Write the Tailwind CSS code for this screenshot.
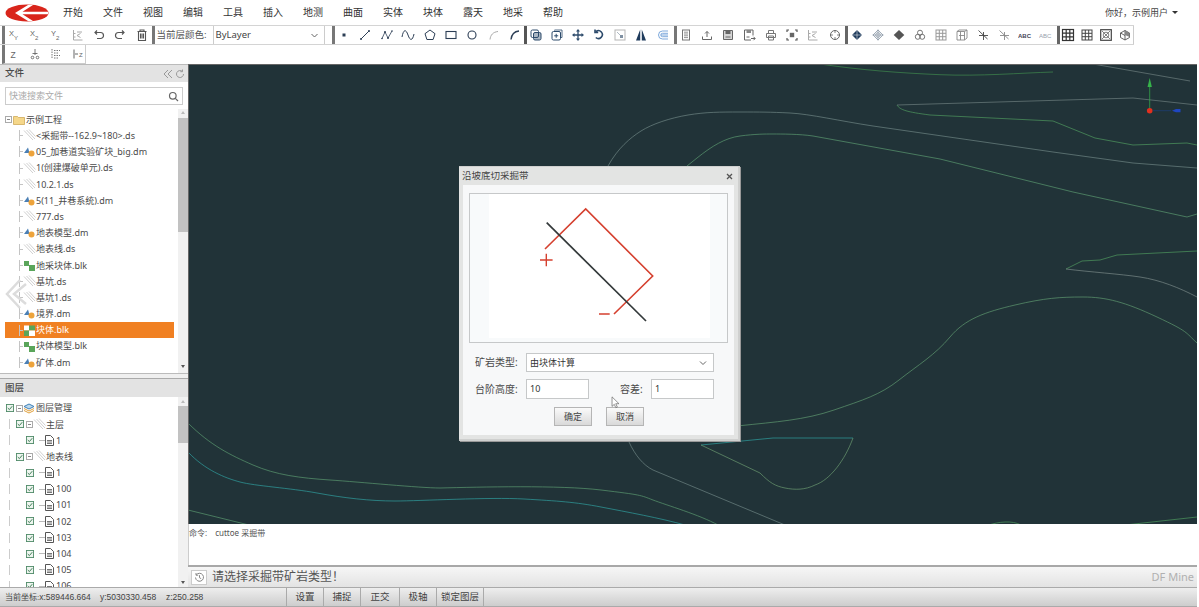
<!DOCTYPE html>
<html lang="zh-CN">
<head>
    <meta charset="UTF-8">
    <meta name="viewport" content="width=device-width, initial-scale=1.0">
    <title>DF Mine</title>
    <script src="https://cdn.jsdelivr.net/npm/@tailwindcss/browser@4"></script>
</head>
<body class="h-screen w-full overflow-hidden bg-white text-[#4a4a4a] font-['Noto_Sans','Noto_Sans_CJK_SC',sans-serif]">
<div class="flex flex-col h-[607px] w-[1197px]">

    <!-- 菜单栏 -->
    <div class="flex items-center h-[25px] shrink-0 w-[1199px] bg-white">
        <svg class="ml-[5px] w-[44px] h-[18px]" viewBox="0 0 44 18">
            <ellipse cx="22" cy="9" rx="21.5" ry="8.5" fill="#d9251b"/>
            <path d="M10 9 23 1h5L17.500 7.800H43v2.400H17.500L28 17h-5z" fill="#fff"/>
        </svg>
        <nav class="flex gap-[20px] ml-[14px] text-[10px] text-[#333]">
            <span>开始</span><span>文件</span><span>视图</span><span>编辑</span><span>工具</span><span>插入</span><span>地测</span>
            <span>曲面</span><span>实体</span><span>块体</span><span>露天</span><span>地采</span><span>帮助</span>
        </nav>
        <div class="flex items-center ml-auto mr-[21px] text-[9px] text-[#444]">
            你好，示例用户
            <span class="ml-[4px] w-0 h-0 border-x-[3px] border-x-transparent border-t-[3px] border-t-[#333]"></span>
        </div>
    </div>

    <!-- 工具栏 -->
    <div class="flex items-center h-[20px] shrink-0 pl-[2px] w-[1134px] border-y border-[#d4d4d4]">
        <div class="w-[149.5px] h-[18px] flex items-center gap-[7.4px] pl-[1.5px] border-l-[3px] border-[#777]" data-icons="xy,x2,y2,stackLight,undo,redo,trash"></div>
        <div class="w-[180.5px] h-[18px] flex items-center pl-[2px] border-l-[3px] border-[#777] text-[9.5px]">
            <span class="w-[56px] text-[#555]">当前层颜色:</span>
            <div class="w-[112px] h-[18px] flex items-center justify-between px-[2px] border-x border-[#ccc] text-[9.5px] text-[#444]">
                ByLayer
                <svg class="w-[9px] h-[9px] mr-[3px]" viewBox="0 0 9 9" fill="none" stroke="#666"><path d="M1.500 3 4.500 6 7.500 3"/></svg>
            </div>
        </div>
        <div class="w-[191.5px] h-[18px] flex items-center gap-[7.4px] pl-[2px] border-l-[3px] border-[#777]" data-icons="dot,line,poly,wave,pentagon,rect,circle,arcLight,arcDark"></div>
        <div class="w-[150px] h-[18px] flex items-center gap-[7.2px] pl-[2px] border-l-[3px] border-[#555]" data-icons="copy,copyPlus,move,rotate,scale,mirror,offset"></div>
        <div class="w-[171.5px] h-[18px] flex items-center gap-[7.3px] pl-[2px] border-l-[3px] border-[#777]" data-icons="doc,upload,save,saveAs,printer,focus,stackLight,target"></div>
        <div class="w-[211.5px] h-[18px] flex items-center gap-[7.05px] pl-[2px] border-l-[3px] border-[#666]" data-icons="diamondCross,diamondRing,diamond,cubes,gridLight,boxGrid,starDark,starLight,abc,abcLight"></div>
        <div class="w-[77.5px] h-[18px] flex items-center gap-[5px] pl-[1.5px] border-l-[3px] border-r border-l-[#666] border-r-[#ccc]" data-icons="gridBold,grid,xSquare,cube"></div>
    </div>
    <div class="flex items-center h-[19px] shrink-0">
        <div class="w-[84px] ml-[2px] h-[19px] flex items-center gap-[7.4px] pl-[1.5px] border-l-[3px] border-r border-b border-l-[#777] border-r-[#ccc] border-b-[#ccc]" data-icons="z,node,stackDash,barZ"></div>
    </div>

    <!-- 主体 -->
    <div class="flex flex-1 min-h-0 relative">
        <!-- 侧栏 -->
        <aside class="flex flex-col w-[188px] shrink-0 bg-white">
            <div class="flex items-center justify-between h-[18px] shrink-0 pl-[5px] pr-[3px] bg-[#e3e3e3] text-[9.5px] font-medium border-t border-[#bbb]">
                文件
                <span class="flex items-center gap-[2px]">
                    <svg class="w-[10px] h-[10px]" viewBox="0 0 10 10" fill="none" stroke="#999"><path d="M5 1 1 5l4 4M9 1 5 5l4 4"/></svg>
                    <svg class="w-[10px] h-[10px]" viewBox="0 0 10 10" fill="none" stroke="#999"><path d="M8.500 5a3.500 3.500 0 1 1-1.200-2.600M7.500 0.500v2.200H5.300"/></svg>
                </span>
            </div>
            <div class="h-[27px] shrink-0 pt-[5px] pl-[5px] pr-[5px]">
                <div class="flex items-center justify-between h-[18px] px-[3px] border border-[#ccc] text-[9px] text-[#aaa]">
                    快速搜索文件
                    <svg class="w-[11px] h-[11px]" viewBox="0 0 11 11" fill="none" stroke="#666" stroke-width="1.200"><circle cx="4.800" cy="4.800" r="3.300"/><path d="m7.300 7.300 2.700 2.700"/></svg>
                </div>
            </div>
            <div class="relative h-[264px] shrink-0 overflow-hidden">
                <div id="fileTree" class="pt-[2.5px] text-[9px]"></div>
                <div class="absolute right-0 top-0 bottom-0 w-[10px] bg-[#f1f1f1]">
                    <div class="mt-[9px] h-[114px] bg-[#c2c2c2]"></div>
                </div>
                <span class="absolute right-[3px] top-[2px] w-0 h-0 border-x-[2.5px] border-x-transparent border-b-[3px] border-b-[#bbb]"></span>
                <span class="absolute right-[3px] bottom-[5px] w-0 h-0 border-x-[2.5px] border-x-transparent border-t-[3px] border-t-[#555]"></span>
                <!-- 翻页箭头 -->
                <svg class="absolute left-[5px] top-[170px] w-[22px] h-[30px]" viewBox="0 0 22 30" fill="none" stroke="#dcdcdc" stroke-width="2.500"><path d="M15 1 2 15l13 14M21 5 9 15l12 10"/></svg>
            </div>
            <div class="h-[5px] shrink-0 bg-[#efefef] border-t border-[#bbb]"></div>
            <div class="flex items-center h-[19px] shrink-0 pl-[5px] bg-[#e3e3e3] border-t border-[#aaa] text-[9.5px] font-medium">图层</div>
            <div class="relative flex-1 min-h-0 overflow-hidden">
                <div id="layerTree" class="pt-[3px] text-[9px]"></div>
                <div class="absolute right-0 top-0 bottom-0 w-[10px] bg-[#f1f1f1]">
                    <div class="mt-[9px] h-[37px] bg-[#c2c2c2]"></div>
                </div>
                <span class="absolute right-[3px] top-[3px] w-0 h-0 border-x-[2.5px] border-x-transparent border-b-[3px] border-b-[#bbb]"></span>
                <span class="absolute right-[3px] bottom-[3px] w-0 h-0 border-x-[2.5px] border-x-transparent border-t-[3px] border-t-[#555]"></span>
            </div>
        </aside>

        <!-- 绘图区 -->
        <main class="flex flex-col flex-1 min-w-0">
            <div class="relative flex-1 min-h-0 bg-[#213338] border-t border-l border-[#666] overflow-hidden">
                <svg class="absolute left-[-1px] top-[-1px] w-[1009px] h-[461px]" viewBox="188 64 1009 461" fill="none" stroke-width="0.700">
                    <path stroke="#3f8a4e" d="M820 64C860 70 900 73 940 74.700S1020 73 1053 72"/>
                    <path stroke="#6f7f80" d="M1093 64 1190 81"/>
                    <path stroke="#6f7f80" d="M897 105 1133 98 1197 105"/>
                    <path stroke="#4f9a5e" d="M897 105C900 110 907 112 930 115L1053 121 1095 138 1133 145 1187 143 1197 145"/>
                    <path stroke="#6f8584" d="M608 166C618 148 630 138 641 131S670 118 688 115 720 112 740 112 770 112 790 113 840 121 873 126L1053 152 1133 163 1197 168"/>
                    <path stroke="#5a9a70" d="M687 166 697 158C712 146 725 138 740 136S765 134 773 134 800 134 813 136L940 159 1073 192 1187 217 1197 214"/>
                    <path stroke="#4f9a5e" d="M1197 251 1117 255 1100 260 1082 261 1066 269"/>
                    <path stroke="#7a8a88" d="M1066 269C1090 272 1120 274 1140 277S1180 288 1197 297"/>
                    <path stroke="#5f9a70" d="M740 425.700C775 422 805 420 834 410S880 395 899 380 935 355 950 337 985 312 1015 305 1060 297 1083 297 1125 302 1157 317 1185 332 1197 343"/>
                    <path stroke="#2f9f9f" d="M701 445 773 438 853 438"/>
                    <path stroke="#6a9a70" d="M853 438C845 460 830 480 815 485 805 490 795 490 785 488S770 483 760 473L701 445"/>
                    <path stroke="#6f8584" d="M629 442C635 455 643 465 653 470L785 525"/>
                    <path stroke="#5a9a70" d="M188 423C210 445 230 455 253 465S300 478 330 480 420 488 440 488C480 487 560 485 601 490S640 495 653 500 700 515 718 525"/>
                    <path stroke="#2f9f9f" d="M188 452C205 470 225 478 240 482S290 488 317 493 370 501 395 501 490 497 524 499 575 502 601 507 660 518 685 525"/>
                    <path stroke="#5a9a70" d="M188 510 249 525"/>
                    <path stroke="#4f9a5e" d="M989 525C998 522 1012 520 1021 525M1125 525 1197 517"/>
                    <!-- 坐标轴 -->
                    <path stroke="#36b24a" d="M1149.700 84v26"/>
                    <path fill="#36b24a" stroke="none" d="M1149.700 78l2.200 9h-4.400z"/>
                    <path stroke="#1c3f7a" d="M1153 110.700h18"/>
                    <path fill="#1f46c0" stroke="none" d="M1172 110.700l4-1.600h4.500v3.200H1176z"/>
                    <circle cx="1149.700" cy="110.700" r="2.800" fill="#e2301f" stroke="none"/>
                </svg>

                <!-- 对话框 -->
                <div class="absolute left-[270px] top-[101px] w-[281px] h-[275px] flex flex-col bg-[#e3e4e3] border-t border-r-2 border-b-2 border-[#cfd0cf] shadow-[1px_1px_0_#999]">
                    <div class="flex items-center justify-between h-[18px] shrink-0 pl-[3px] pr-[5px] text-[9.5px] text-[#444]">
                        沿坡底切采掘带
                        <svg class="w-[7px] h-[7px]" viewBox="0 0 7 7" stroke="#555" stroke-width="1.300"><path d="m1 1 5 5M6 1 1 6"/></svg>
                    </div>
                    <div class="relative flex-1 mx-[4px] mb-[4px] px-[6px] pt-[8px] bg-[#f7f8f9]">
                        <div class="h-[150px] border border-[#c6c8c9] bg-[#f8fafb]">
                            <svg class="w-[258px] h-[148px]" viewBox="0 0 258 148" fill="none">
                                <rect x="19" y="0" width="221" height="144" fill="#fff"/>
                                <path stroke="#d5402f" stroke-width="1.600" d="M75 55 115.700 15 182.700 82 144 120"/>
                                <path stroke="#33393a" stroke-width="1.700" d="M76.700 28.700 176 127"/>
                                <path stroke="#d5402f" stroke-width="1.400" d="M70 66h12.600M76.300 59.700v12.600M129 120h10.700"/>
                            </svg>
                        </div>
                        <div class="flex items-center h-[19px] mt-[10px] text-[10px]">
                            <span class="w-[57px] pl-[6px] shrink-0">矿岩类型:</span>
                            <div class="w-[188px] h-[19px] flex items-center justify-between pl-[3px] pr-[6px] bg-white border border-[#c6c8c9] text-[9px] text-[#333]">
                                由块体计算
                                <svg class="w-[8px] h-[8px]" viewBox="0 0 8 8" fill="none" stroke="#666"><path d="M1 2.500 4 5.500 7 2.500"/></svg>
                            </div>
                        </div>
                        <div class="flex items-center h-[20px] mt-[7px] text-[10px]">
                            <span class="w-[57px] pl-[6px] shrink-0">台阶高度:</span>
                            <div class="w-[63px] h-[20px] flex items-center pl-[3px] bg-white border border-[#c6c8c9] text-[9px] text-[#333]">10</div>
                            <span class="w-[31px] ml-[31px] shrink-0">容差:</span>
                            <div class="w-[63px] h-[20px] flex items-center pl-[3px] bg-white border border-[#c6c8c9] text-[9px] text-[#333]">1</div>
                        </div>
                        <div class="flex gap-[14px] mt-[8px] pl-[85px] text-[9px] text-[#444]">
                            <button class="w-[38px] h-[19px] border border-[#b5b5b5] bg-gradient-to-b from-[#fafafa] to-[#d9d9d9]">确定</button>
                            <button class="w-[38px] h-[19px] border border-[#b5b5b5] bg-gradient-to-b from-[#fafafa] to-[#d9d9d9]">取消</button>
                        </div>
                        <svg class="absolute left-[148px] top-[211px] w-[9px] h-[13px]" viewBox="0 0 10 15" fill="#fff" stroke="#666" stroke-width="0.800"><path d="M1 1v11l2.600-2.400 1.800 4 1.700-.8-1.800-3.900H9z"/></svg>
                    </div>
                </div>
            </div>

            <!-- 命令行 -->
            <div class="h-[41px] shrink-0 bg-white border-l border-[#ccc] text-[8px] text-[#555] pt-[3px] whitespace-nowrap">命令:<span class="ml-[8px]">cuttoe 采掘带</span></div>
            <div class="flex items-center h-[22px] shrink-0 border-t-2 border-[#a8a8a8] bg-gradient-to-b from-[#f6f6f6] to-[#e3e3e3]">
                <span class="flex items-center justify-center ml-[3px] w-[16px] h-[15px] bg-white border border-[#ccc]">
                    <svg class="w-[11px] h-[11px]" viewBox="0 0 11 11" fill="none" stroke="#888"><path d="M2.200 3A4 4 0 1 1 1.500 5.500M2 1v2.200h2.200M5.500 3.200v2.500l1.700 1"/></svg>
                </span>
                <span class="ml-[5px] text-[12px] text-[#555]">请选择采掘带矿岩类型！</span>
                <span class="ml-auto mr-[3px] mt-[1px] text-[11px] text-[#b0b0b0]">DF Mine</span>
            </div>
        </main>
    </div>

    <!-- 状态栏 -->
    <div class="flex items-center h-[20px] shrink-0 border-y border-[#aaa] bg-gradient-to-b from-[#eeeeee] to-[#cdcdcd] text-[9.5px] text-[#444]">
        <div class="flex items-center w-[286px] pl-[5px] whitespace-nowrap text-[8.5px] font-['Liberation_Sans','Noto_Sans_CJK_SC',sans-serif]">
            <span class="w-[95px]"><span class="text-[8px]">当前坐标:</span>x:589446.664</span>
            <span class="w-[66px]">y:5030330.458</span>
            <span>z:250.258</span>
        </div>
        <span class="flex items-center justify-center w-[37px] h-full border-l border-[#aaa]">设置</span>
        <span class="flex items-center justify-center w-[37px] h-full border-l border-[#aaa]">捕捉</span>
        <span class="flex items-center justify-center w-[39px] h-full border-l border-[#aaa]">正交</span>
        <span class="flex items-center justify-center w-[37px] h-full border-l border-[#aaa]">极轴</span>
        <span class="flex items-center justify-center w-[48px] h-full border-x border-[#aaa]">锁定图层</span>
    </div>
</div>

<script>
    // Toolbar icons, 14x14
    const t = (x, y, s, c, w) => `<text x="${x}" y="${y}" font-size="${s}" fill="${c || '#666'}" font-weight="${w || 400}" stroke="none" font-family="Liberation Sans">`;
    const icons = {
        xy: `${t(2,8,7.5)}X</text>${t(7,12,6)}Y</text>`,
        x2: `${t(2,8,7.5)}X</text>${t(7,12,6)}2</text>`,
        y2: `${t(2,8,7.5)}Y</text>${t(7,12,6)}2</text>`,
        stackLight: `<path stroke="#aaa" d="M2.500 2v10h9M2.500 5.500h2M2.500 9h2M6 4l5 0M6 7.500l3.500 2M6 7.500l3.500-2"/>`,
        undo: `<path stroke="#555" stroke-width="1.200" d="M5 2.500 3 4.500 5 6.500M3 4.500H8.500a2.800 2.800 0 0 1 0 6H5"/>`,
        redo: `<path stroke="#555" stroke-width="1.200" d="M9 2.500l2 2L9 6.500M11 4.500H5.500a2.800 2.800 0 0 0 0 6h3.500"/>`,
        trash: `<path stroke="#555" stroke-width="1.100" d="M2.500 3.500h9M5 3.500V2h4v1.500M3.500 3.500v9h7v-9M5.500 5.500v5M7 5.500v5M8.500 5.500v5"/>`,
        dot: `<rect x="5.500" y="5.500" width="3" height="3" fill="#2c3e55" stroke="none"/>`,
        line: `<path stroke="#2c3e55" d="M3 11 11 3"/><circle cx="3" cy="11" r="1" fill="#2c3e55" stroke="none"/><circle cx="11" cy="3" r="1" fill="#2c3e55" stroke="none"/>`,
        poly: `<path stroke="#2c3e55" stroke-width=".8" d="M2 10.500 5 4 8 10 12 3"/><circle cx="5" cy="4" r="1" fill="#2c3e55" stroke="none"/><circle cx="8" cy="10" r="1" fill="#2c3e55" stroke="none"/><circle cx="2" cy="10.500" r=".8" fill="#2c3e55" stroke="none"/><circle cx="12" cy="3" r=".8" fill="#2c3e55" stroke="none"/>`,
        wave: `<path stroke="#2c3e55" d="M1 9C2.500 1 5 1 7 7s4.500 6 6-1"/>`,
        pentagon: `<path stroke="#2c3e55" d="M7 2 12 5.700 10.100 11.500H3.900L2 5.700z"/>`,
        rect: `<rect x="2" y="3.500" width="10" height="7" stroke="#2c3e55" stroke-width="1.100"/>`,
        circle: `<circle cx="7" cy="7" r="4" stroke="#2c3e55" stroke-width="1.100"/>`,
        arcLight: `<path stroke="#aaa" d="M3 11.500C3.500 7 6 4 11 3.500"/>`,
        arcDark: `<path stroke="#2c3e55" stroke-width="1.400" d="M3 11.500C3.500 7 6 3.500 11 3"/>`,
        copy: `<rect x="2" y="2" width="7.500" height="7.500" rx="1.500" stroke="#2c4a6b"/><rect x="4.500" y="4.500" width="7.500" height="7.500" rx="1.500" fill="#2c4a6b" fill-opacity=".4" stroke="#2c4a6b"/>`,
        copyPlus: `<path stroke="#2c4a6b" stroke-width=".8" d="M4.500 2.500V2h7.500v7.500h-1"/><rect x="2" y="3.500" width="8.500" height="8.500" rx="1.500" stroke="#2c4a6b"/><path stroke="#2c4a6b" d="M6.200 5.800v4M4.200 7.800h4"/>`,
        move: `<path stroke="#2c4a6b" stroke-width="1.300" d="M7 3v8M3 7h8"/><path fill="#2c4a6b" stroke="none" d="M7 1 9 3.500H5zM7 13 5 10.500h4zM1 7 3.500 5v4zM13 7 10.500 9V5z"/>`,
        rotate: `<path stroke="#2c4a6b" stroke-width="1.600" d="M4 3.500A3.900 3.900 0 1 1 3.800 9.500M3 1.500v3h3.200"/>`,
        scale: `<rect x="2" y="2" width="10" height="10" stroke="#b5b5b5"/><rect x="7" y="7" width="3" height="3" fill="#7f90a2" stroke="none"/><path stroke="#9aa8b5" stroke-width=".8" d="M4 4l3 3"/>`,
        mirror: `<path fill="#1f3b5c" stroke="none" d="M6.200 1.500V12.500H2zM7.800 1.500V12.500H12z"/>`,
        offset: `<path stroke="#6f9fd8" stroke-width=".9" d="M12 3H6.500a4 4 0 0 0 0 8H12M12 5.300H6.500a1.700 1.700 0 0 0 0 3.400H12M5 7h7"/>`,
        doc: `<rect x="3.500" y="2" width="7" height="10" stroke="#777"/><path stroke="#777" stroke-width=".8" d="M5 4.200h4M5 6h4M5 7.800h4M5 9.600h4"/>`,
        upload: `<path stroke="#666" d="M7 9V3.500M5 5.500 7 3.500 9 5.500M2.500 8.500V11.500H11.500V8.500"/>`,
        save: `<path stroke="#666" fill="#d5d5d5" d="M2.500 2.500h9v9h-9z"/><path fill="#666" stroke="none" d="M4.500 2.500h5v3.500h-5z"/><path stroke="#666" d="M4.500 9h5"/>`,
        saveAs: `<path stroke="#666" d="M9 12H2.500V2H11v5.500"/><path fill="#888" stroke="none" d="M4.500 2h4.500v3H4.500z"/><path stroke="#666" d="M4.500 9h3M9 10.500h4M11.500 8.800l1.700 1.700-1.700 1.700"/>`,
        printer: `<path stroke="#777" d="M4.500 5V2.500h5V5M2.500 5.500h9V9.500h-9zM4.500 8h5v4h-5z"/>`,
        focus: `<path stroke="#555" stroke-width="1.200" d="M2 4V2H4M10 2h2V4M12 10v2H10M4 12H2V10"/><rect x="4.800" y="4.800" width="4.400" height="4.400" fill="#666" stroke="none"/>`,
        target: `<circle cx="7" cy="7" r="4.500" stroke="#666"/><path stroke="#666" stroke-width=".8" d="M7 2v3M7 9v3M2 7h3M9 7h3"/>`,
        diamondCross: `<path fill="#1f3b5c" stroke="none" d="M7 2 12 7 7 12 2 7z"/><path stroke="#fff" stroke-width=".5" d="M2 7h10M7 2v10"/>`,
        diamondRing: `<path stroke="#8a98a6" stroke-width=".8" d="M7 2 12 7 7 12 2 7z"/><circle cx="7" cy="7" r="2.300" stroke="#8a98a6" stroke-width=".8"/><path stroke="#8a98a6" stroke-width=".8" d="M1.500 7h11M7 1.500v11"/>`,
        diamond: `<path fill="#555" stroke="none" d="M7 2 12.300 7 7 12 1.700 7z"/>`,
        cubes: `<circle cx="7" cy="4.700" r="2.500" stroke="#666" stroke-width=".9"/><circle cx="4.800" cy="8.800" r="2.500" stroke="#666" stroke-width=".9"/><circle cx="9.200" cy="8.800" r="2.500" stroke="#666" stroke-width=".9"/>`,
        gridLight: `<rect x="2" y="2" width="10" height="10" stroke="#999"/><path stroke="#999" d="M5.300 2v10M8.700 2v10M2 5.300h10M2 8.700h10"/>`,
        boxGrid: `<path stroke="#888" stroke-width=".9" d="M2 3.500h7.500v8.500H2zM2 3.500 4 2h8l-2.500 1.500M12 2v8l-2.500 2M4 7.500h5.500M5.500 3.500v8.500"/>`,
        starDark: `<path stroke="#444" stroke-width=".9" d="M2.500 2.500l9 8.500M7.500 4v8M3 7.500h9"/>`,
        starLight: `<path stroke="#888" stroke-width=".9" d="M2.500 2.500l9 8.500M7.500 4v8M3 7.500h9"/>`,
        abc: `${t(0,9.500,6,'#445',700)}ABC</text>`,
        abcLight: `${t(0,9.500,6,'#98a2ad')}ABC</text>`,
        gridBold: `<rect x="1.500" y="1.500" width="11" height="11" stroke="#333" stroke-width="1.200"/><path stroke="#333" stroke-width="1.200" d="M5.200 1.500v11M8.800 1.500v11M1.500 5.200h11M1.500 8.800h11"/>`,
        grid: `<rect x="2" y="2" width="10" height="10" stroke="#444"/><path stroke="#444" d="M5.300 2v10M8.700 2v10M2 5.300h10M2 8.700h10"/>`,
        xSquare: `<rect x="1.700" y="1.700" width="10.600" height="10.600" stroke="#444" stroke-width="1.200"/><path stroke="#666" stroke-width=".8" d="M3 3l8 8M11 3l-8 8"/><circle cx="7" cy="7" r="2.800" stroke="#666" stroke-width=".8"/>`,
        cube: `<path stroke="#555" stroke-width=".9" d="M2.500 5 7 2.500 11.500 5v4.500L7 12 2.500 9.500zM7 2.500V12M2.500 5 7 7.500"/><path fill="#888" stroke="none" d="M7 2.500 11.500 5v4L7 7z"/>`,
        z: `${t(3.500,10.500,8.5)}Z</text>`,
        node: `<circle cx="4.500" cy="10.500" r="1.300" stroke="#666" stroke-width=".9"/><circle cx="9.500" cy="10.500" r="1.300" stroke="#666" stroke-width=".9"/><path stroke="#666" stroke-width=".9" d="M7 2V8M4.500 6.500h5"/>`,
        stackDash: `<path stroke="#777" stroke-dasharray="1.500 1" d="M3 2v10M5 3.500h6M5 6h4M5 8.500h6M5 11h4"/>`,
        barZ: `<path stroke="#666" d="M3 2.500v9M4 7h3"/>${t(8,9.500,6)}Z</text>`
    };
    document.querySelectorAll('[data-icons]').forEach(function (group) {
        group.innerHTML = group.dataset.icons.split(',').map(name =>
            `<svg class="w-[14px] h-[14px] shrink-0" viewBox="0 0 14 14" fill="none">${icons[name]}</svg>`
        ).join('');
    });

    // Tree icons
    const treeIcons = {
        ds: `<svg class="w-[13px] h-[13px] shrink-0" viewBox="0 0 13 13" fill="none" stroke="#c4c4c4" stroke-width=".8"><path d="M1 1.500 10 11M3.500 1 12 10M6 .5l6.500 7"/></svg>`,
        dm: `<svg class="w-[13px] h-[13px] shrink-0" viewBox="0 0 13 13"><path fill="#4a7fb5" d="M1 8 5 2.500 6.500 8z"/><circle cx="8.500" cy="8.500" r="3" fill="#eda33b"/></svg>`,
        blk: `<svg class="w-[13px] h-[13px] shrink-0" viewBox="0 0 13 13"><rect x="1" y="2" width="5" height="5" fill="#5aa55a"/><rect x="6" y="6" width="6" height="6" fill="#5aa55a"/></svg>`,
        blkOn: `<svg class="w-[13px] h-[13px] shrink-0" viewBox="0 0 13 13"><rect x="1" y="1.500" width="5" height="5" fill="#fff"/><rect x="6" y="1.500" width="6" height="5" fill="#5aa55a"/><rect x="1" y="6.500" width="5" height="5.500" fill="#5aa55a"/><rect x="6" y="6.500" width="6" height="5.500" fill="#fff"/></svg>`
    };
    const minusBox = `<span class="flex items-center justify-center w-[7px] h-[7px] border border-[#aaa] shrink-0"><span class="w-[3px] h-px bg-[#888]"></span></span>`;
    const check = `<svg class="w-[8px] h-[8px] shrink-0" viewBox="0 0 9 9" fill="#eef5ef" stroke="#4e8a68"><rect x=".5" y=".5" width="8" height="8"/><path fill="none" stroke="#2c6d46" d="M2 4.500 3.800 6.300 7 2.500"/></svg>`;

    // File tree
    const files = [
        ['ds', '<采掘带--162.9~180>.ds'], ['dm', '05_加巷道实验矿块_big.dm'], ['ds', '1(创建爆破单元).ds'], ['ds', '10.2.1.ds'],
        ['dm', '5(11_井巷系统).dm'], ['ds', '777.ds'], ['dm', '地表模型.dm'], ['ds', '地表线.ds'], ['blk', '地采块体.blk'],
        ['ds', '基坑.ds'], ['ds', '基坑1.ds'], ['dm', '境界.dm'], ['blkOn', '块体.blk'], ['blk', '块体模型.blk'], ['dm', '矿体.dm']
    ];
    const fileTree = document.getElementById('fileTree');
    const root = document.createElement('div');
    root.className = 'flex items-center h-[16.2px] pl-[5px]';
    root.innerHTML = `${minusBox}<svg class="w-[12px] h-[10px] ml-px shrink-0" viewBox="0 0 12 10" fill="#f5d78a" stroke="#c9a24a" stroke-width=".7"><path d="M.5 1.500h4l1 1h6v7h-11z"/></svg><span class="ml-px">示例工程</span>`;
    fileTree.appendChild(root);
    files.forEach(function (f) {
        const on = f[0] === 'blkOn';
        const row = document.createElement('div');
        row.className = on
            ? 'flex items-center h-[16.2px] ml-[5px] w-[169px] pl-[14px] bg-[#f08022] text-white'
            : 'flex items-center h-[16.2px] ml-[5px] w-[169px] pl-[14px]';
        row.innerHTML = `<span class="flex items-center w-[4px] h-[11px] border-l border-[#c4c4c4] shrink-0"><span class="w-full h-px bg-[#c4c4c4]"></span></span>${treeIcons[f[0]]}<span class="whitespace-nowrap">${f[1].replace('<', '&lt;')}</span>`;
        fileTree.appendChild(row);
    });

    // Layer tree
    const layerTree = document.getElementById('layerTree');
    const rows = [
        [0, '图层管理'], [1, '主层'], [2, '1'], [1, '地表线'], [2, '1'], [2, '100'], [2, '101'],
        [2, '102'], [2, '103'], [2, '104'], [2, '105'], [2, '106']
    ];
    rows.forEach(function (r) {
        const row = document.createElement('div');
        row.className = 'flex items-center h-[16.2px] pl-[6px]';
        if (r[0] === 0) {
            row.innerHTML = `${check}<span class="ml-[2px] flex">${minusBox}</span><svg class="w-[12px] h-[11px] shrink-0" viewBox="0 0 12 11" fill="none" stroke="#3f7fb5"><path d="M6 1 11 3.500 6 6 1 3.500z" fill="#bcd9ee"/><path d="M1 5.500 6 8l5-2.500M1 7.500 6 10l5-2.500" stroke="#e0a03c"/></svg><span class="ml-px">${r[1]}</span>`;
        } else if (r[0] === 1) {
            row.innerHTML = `<span class="w-[10px] shrink-0 flex"><span class="ml-[3px] w-px h-[10px] bg-[#ccc]"></span></span>${check}<span class="ml-[2px] flex">${minusBox}</span>${treeIcons.ds}<span>${r[1]}</span>`;
        } else {
            row.innerHTML = `<span class="w-[20px] shrink-0 flex"><span class="ml-[3px] w-px h-[10px] bg-[#ccc]"></span></span>${check}<span class="ml-[5px] w-[6px] h-px bg-[#bbb] shrink-0"></span><svg class="w-[9px] h-[11px] shrink-0" viewBox="0 0 9 11" fill="none" stroke="#555"><path d="M.5.500h5l3 3v7h-8z"/><path d="M2 5.500h5M2 7h5M2 8.500h5" stroke="#777"/></svg><span class="ml-[2px]">${r[1]}</span>`;
        }
        layerTree.appendChild(row);
    });
</script>
</body>
</html>
